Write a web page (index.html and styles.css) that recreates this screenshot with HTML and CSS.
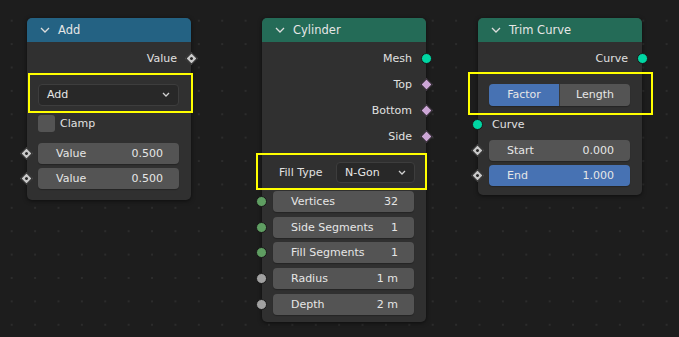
FILE: index.html
```html
<!DOCTYPE html>
<html lang="en">
<head>
    <meta charset="UTF-8">
    <meta name="viewport" content="width=device-width, initial-scale=1.0">
    <title>Node Editor</title>
    <link rel="stylesheet" href="styles.css">
</head>
<body>
    <div class="canvas">

        <!-- Math: Add -->
        <div class="node node-add">
            <div class="node-header header-blue">
                <svg class="chev" width="10" height="6" viewBox="0 0 10 6"><path d="M1 1 L5 5 L9 1" /></svg>
                <span>Add</span>
            </div>
            <div class="node-body">
                <div class="row out">
                    <span>Value</span>
                    <i class="sock sock-r diamond grey dot"></i>
                </div>
                <div class="row prop gap-lg">
                    <div class="menu wide"><span>Add</span><svg width="8" height="5" viewBox="0 0 8 5"><path d="M1 1 L4 4 L7 1" /></svg></div>
                </div>
                <div class="row prop gap-sm">
                    <div class="check"></div>
                    <span class="check-label">Clamp</span>
                </div>
                <div class="row in gap-md">
                    <i class="sock sock-l diamond grey dot"></i>
                    <div class="field"><span>Value</span><span>0.500</span></div>
                </div>
                <div class="row in">
                    <i class="sock sock-l diamond grey dot"></i>
                    <div class="field"><span>Value</span><span>0.500</span></div>
                </div>
            </div>
        </div>

        <!-- Cylinder -->
        <div class="node node-cyl">
            <div class="node-header header-green">
                <svg class="chev" width="10" height="6" viewBox="0 0 10 6"><path d="M1 1 L5 5 L9 1" /></svg>
                <span>Cylinder</span>
            </div>
            <div class="node-body body-cyl">
                <div class="row out">
                    <span>Mesh</span>
                    <i class="sock sock-r circle teal"></i>
                </div>
                <div class="row out">
                    <span>Top</span>
                    <i class="sock sock-r diamond pink"></i>
                </div>
                <div class="row out">
                    <span>Bottom</span>
                    <i class="sock sock-r diamond pink"></i>
                </div>
                <div class="row out">
                    <span>Side</span>
                    <i class="sock sock-r diamond pink"></i>
                </div>
                <div class="row prop fill-row gap-lg">
                    <span class="prop-label">Fill Type</span>
                    <div class="menu short"><span>N-Gon</span><svg width="8" height="5" viewBox="0 0 8 5"><path d="M1 1 L4 4 L7 1" /></svg></div>
                </div>
                <div class="row in gap-xs">
                    <i class="sock sock-l circle green"></i>
                    <div class="field"><span>Vertices</span><span>32</span></div>
                </div>
                <div class="row in">
                    <i class="sock sock-l circle green"></i>
                    <div class="field"><span>Side Segments</span><span>1</span></div>
                </div>
                <div class="row in">
                    <i class="sock sock-l circle green"></i>
                    <div class="field"><span>Fill Segments</span><span>1</span></div>
                </div>
                <div class="row in">
                    <i class="sock sock-l circle grey"></i>
                    <div class="field"><span>Radius</span><span>1 m</span></div>
                </div>
                <div class="row in">
                    <i class="sock sock-l circle grey"></i>
                    <div class="field"><span>Depth</span><span>2 m</span></div>
                </div>
            </div>
        </div>

        <!-- Trim Curve -->
        <div class="node node-trim">
            <div class="node-header header-green">
                <svg class="chev" width="10" height="6" viewBox="0 0 10 6"><path d="M1 1 L5 5 L9 1" /></svg>
                <span>Trim Curve</span>
            </div>
            <div class="node-body body-trim">
                <div class="row out">
                    <span>Curve</span>
                    <i class="sock sock-r circle teal"></i>
                </div>
                <div class="row prop gap-lg">
                    <div class="segmented">
                        <span class="seg active">Factor</span>
                        <span class="seg">Length</span>
                    </div>
                </div>
                <div class="row in-label gap-md">
                    <i class="sock sock-l circle teal"></i>
                    <span>Curve</span>
                </div>
                <div class="row in">
                    <i class="sock sock-l diamond grey dot"></i>
                    <div class="field"><span>Start</span><span>0.000</span></div>
                </div>
                <div class="row in">
                    <i class="sock sock-l diamond grey dot"></i>
                    <div class="field active"><span>End</span><span>1.000</span></div>
                </div>
            </div>
        </div>

        <!-- highlight boxes -->
        <div class="mark mark-add"></div>
        <div class="mark mark-cyl"></div>
        <div class="mark mark-trim"></div>
    </div>
</body>
</html>
```

FILE: styles.css
```css
body {
    margin: 0;
    padding: 0;
    background-color: #1d1d1d;
    font-family: "DejaVu Sans", Arial, sans-serif;
    font-size: 11px;
    color: #e0e0e0;
}
.canvas {
    position: relative;
    width: 679px;
    height: 337px;
    overflow: hidden;
    background-color: #1d1d1d;
    background-image: radial-gradient(circle, #2c2c2c 1.1px, transparent 1.3px);
    background-size: 23.4px 23.4px;
    background-position: 0 9px;
}
.node {
    position: absolute;
    top: 18px;
    width: 164px;
    background-color: #303030;
    border-radius: 5px;
    box-shadow: 0 1px 4px rgba(0, 0, 0, 0.55);
}
.node-add { left: 27px; }
.node-cyl { left: 262px; }
.node-trim { left: 478px; }
.node-header {
    height: 24px;
    display: flex;
    align-items: center;
    gap: 8px;
    padding-left: 13px;
    border-radius: 5px 5px 0 0;
    color: #e6e6e6;
    font-size: 11.5px;
}
.header-blue { background-color: #246283; }
.header-green { background-color: #246b57; }
.chev path {
    fill: none;
    stroke: #dcdcdc;
    stroke-width: 1.3;
}
.node-body {
    padding: 4px 0 8px;
}
.body-cyl { padding-bottom: 5px; }
.body-trim { padding-bottom: 6px; }
.row {
    position: relative;
    height: 25.75px;
    display: flex;
    align-items: center;
}
.row.out {
    justify-content: flex-end;
    padding-right: 14px;
}
.row.in, .row.prop {
    padding: 0 12px 0 11px;
}
.row.in-label {
    padding: 0 14px;
}
.gap-lg { margin-top: 10px; }
.gap-md { margin-top: 4px; }
.gap-sm { margin-top: 3px; }
.gap-xs { margin-top: 3.5px; }
.row.fill-row {
    height: 26px;
    padding-left: 17px;
    padding-right: 11px;
}
.prop-label {
    color: #e0e0e0;
}

/* sockets */
.sock {
    position: absolute;
    top: 50%;
    box-sizing: border-box;
}
.sock-r { right: -6px; }
.sock-l { left: -6px; }
.circle {
    width: 11px;
    height: 11px;
    margin-top: -5.5px;
    border-radius: 50%;
    border: 1px solid #181818;
}
.diamond {
    width: 9px;
    height: 9px;
    margin-top: -4.5px;
    margin-left: 1px;
    margin-right: 1px;
    transform: rotate(45deg);
    border: 1px solid #181818;
}
.diamond.dot::after {
    content: "";
    position: absolute;
    left: 2px;
    top: 2px;
    width: 3px;
    height: 3px;
    border-radius: 50%;
    background-color: #2a2a2a;
}
.teal { background-color: #00d6a3; }
.pink { background-color: #cca6d6; }
.grey { background-color: #a1a1a1; }
.diamond.grey { background-color: #c8c8c8; }
.green { background-color: #5f9e62; }

/* widgets */
.field {
    flex: 1;
    height: 21px;
    display: flex;
    align-items: center;
    justify-content: space-between;
    padding: 0 16px 0 18px;
    background-color: #545454;
    border-radius: 4px;
    color: #e6e6e6;
    box-shadow: 0 1px 1px rgba(0, 0, 0, 0.25);
}
.field.active {
    background-color: #4772b3;
}
.menu {
    flex: 1;
    height: 21px;
    box-sizing: border-box;
    display: flex;
    align-items: center;
    justify-content: space-between;
    padding: 0 8px 0 8px;
    background-color: #282828;
    border: 1px solid #3d3d3d;
    border-radius: 4px;
    color: #e6e6e6;
}
.menu.wide {
    height: 22px;
}
.menu.short {
    flex: none;
    width: 79px;
    margin-left: auto;
}
.menu path {
    fill: none;
    stroke: #d0d0d0;
    stroke-width: 1.3;
}
.check {
    width: 17px;
    height: 17px;
    background-color: #545454;
    border-radius: 3px;
}
.check-label {
    margin-left: 5px;
}
.segmented {
    flex: 1;
    height: 22px;
    display: flex;
    border-radius: 4px;
    overflow: hidden;
    box-shadow: 0 1px 1px rgba(0, 0, 0, 0.25);
}
.seg {
    flex: 1;
    display: flex;
    align-items: center;
    justify-content: center;
    background-color: #545454;
    color: #e6e6e6;
}
.seg.active {
    background-color: #4772b3;
    border-right: 1px solid #3a3a3a;
}

/* highlight boxes */
.mark {
    position: absolute;
    border: 2px solid #ffff00;
    box-sizing: border-box;
}
.mark-add { left: 28px; top: 73px; width: 165px; height: 40px; }
.mark-cyl { left: 256px; top: 153px; width: 171px; height: 37px; }
.mark-trim { left: 468px; top: 72px; width: 185px; height: 43px; }
```
